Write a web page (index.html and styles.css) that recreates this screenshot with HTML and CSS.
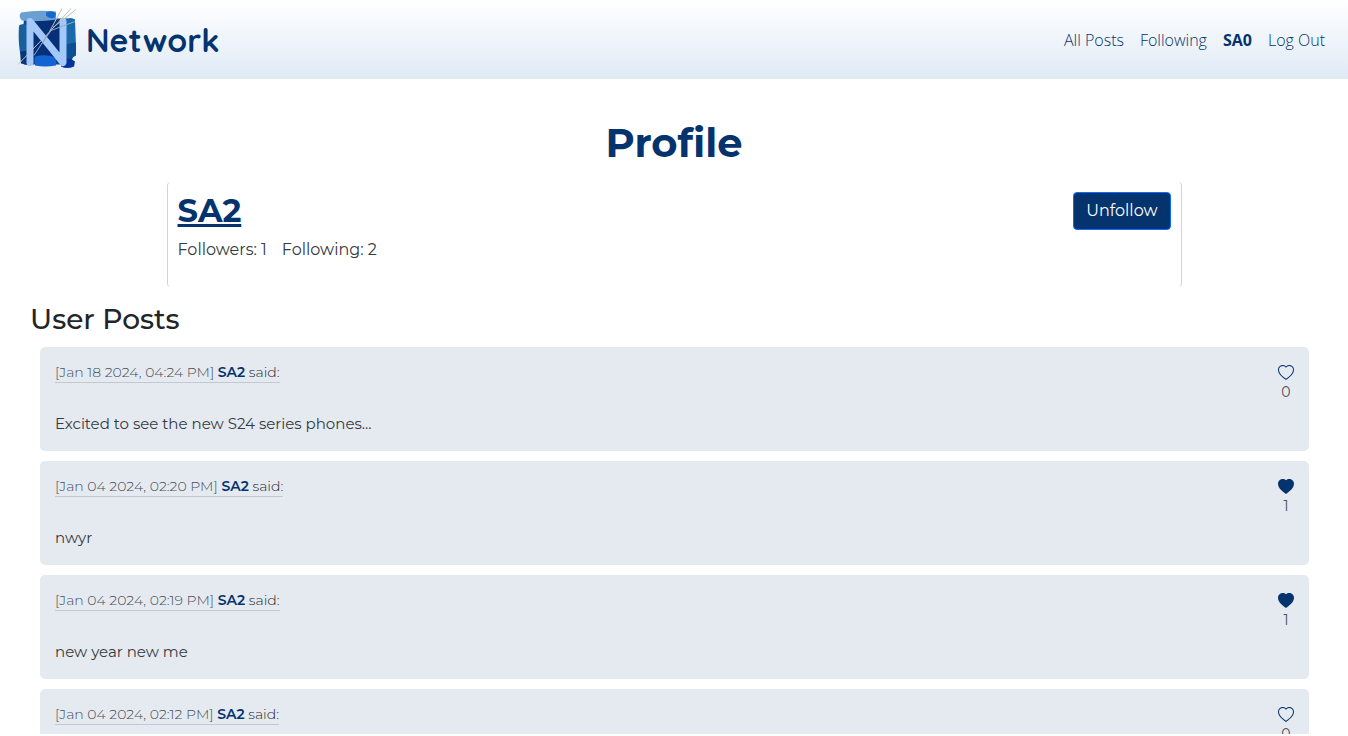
FILE: index.html
```html
<!DOCTYPE html>
<html lang="en">
<head>
<meta charset="utf-8">
<meta name="viewport" content="width=device-width, initial-scale=1">
<title>Network</title>
<link rel="stylesheet" href="styles.css">
</head>
<body class="page">
<svg class="symbols" aria-hidden="true">
  <symbol id="heart" viewBox="0 0 16 16"><path d="m8 2.748-.717-.737C5.6.281 2.514.878 1.4 3.053c-.523 1.023-.641 2.5.314 4.385.92 1.815 2.834 3.989 6.286 6.357 3.452-2.368 5.365-4.542 6.286-6.357.955-1.886.838-3.362.314-4.385C13.486.878 10.4.28 8.717 2.01zM8 15C-7.333 4.868 3.279-3.04 7.824 1.143q.09.083.176.171a3 3 0 0 1 .176-.17C12.72-3.042 23.333 4.867 8 15"/></symbol>
  <symbol id="heart-fill" viewBox="0 0 16 16"><path d="M8 1.314C12.438-3.248 23.534 4.735 8 15-7.534 4.736 3.562-3.248 8 1.314"/></symbol>
</svg>
<header class="navbar">
  <a class="brand" href="#">
    <svg class="logo" viewBox="0 0 60 62" aria-hidden="true">
      <path fill="#0d4a93" d="M6 10 50 10 56 18 56 46 52 56 6 56 3 44z"/>
      <path fill="#053078" d="M14 12H46V49H12z"/>
      <path fill="#17609b" d="M1 17 Q5 14 9 17 L10 44 Q6 47 2 44 Q0 32 1 17z"/>
      <path fill="#1b6bab" d="M47 11 Q53 8 57 11 L58 38 Q55 42 48 38z"/>
      <path fill="#0d4f91" d="M47 36 58 34 58 47 Q53 51 47 49z"/>
      <path fill="#6b9fd0" d="M3 4 Q20 1 38 3 L38 11 Q19 14 4 12 Q0 8 3 4z"/>
      <path fill="#1768cd" d="M28 4 Q34 1 38 5 L37 9 Q31 11 28 7z"/>
      <path fill="#1264d3" d="M17 48 Q27 45 38 49 L38 57 Q27 59 17 57z"/>
      <path fill="#09367b" d="M2 43 11 42 16 49 12 57 3 55z"/>
      <path fill="#07349b" d="M43 52 Q52 48 57 53 L56 58 Q49 61 43 58z"/>
      <path class="logo-letter" d="M12 54V13L45 54V13"/>
      <path class="logo-strings" stroke="#c4bfb8" d="M0 56 31 24 44 0M31 24 53 0M35 19 58 1"/>
      <path class="logo-strings" stroke="#8fa9cc" d="M16 47 31 24M24 35 33 22 57 13"/>
    </svg>
    <span>Network</span>
  </a>
  <nav class="nav-links">
    <a href="#">All Posts</a>
    <a href="#">Following</a>
    <a class="current-user" href="#">SA0</a>
    <a href="#">Log Out</a>
  </nav>
</header>
<main class="content">
  <h1 class="title">Profile</h1>
  <section class="profile">
    <div>
      <h2 class="profile-name"><a href="#">SA2</a></h2>
      <div class="stats"><span>Followers: 1</span><span>Following: 2</span></div>
    </div>
    <button class="follow-button" type="button">Unfollow</button>
  </section>
  <h3 class="posts-title">User Posts</h3>
  <div class="posts">
    <article class="post">
      <div>
        <div class="post-head"><time>[Jan 18 2024, 04:24 PM]</time> <a href="#">SA2</a> said:</div>
        <p class="post-text">Excited to see the new S24 series phones...</p>
      </div>
      <div class="likes"><button type="button" aria-label="Like"><svg><use href="#heart"/></svg></button><span>0</span></div>
    </article>
    <article class="post">
      <div>
        <div class="post-head"><time>[Jan 04 2024, 02:20 PM]</time> <a href="#">SA2</a> said:</div>
        <p class="post-text">nwyr</p>
      </div>
      <div class="likes"><button type="button" aria-label="Unlike"><svg><use href="#heart-fill"/></svg></button><span>1</span></div>
    </article>
    <article class="post">
      <div>
        <div class="post-head"><time>[Jan 04 2024, 02:19 PM]</time> <a href="#">SA2</a> said:</div>
        <p class="post-text">new year new me</p>
      </div>
      <div class="likes"><button type="button" aria-label="Unlike"><svg><use href="#heart-fill"/></svg></button><span>1</span></div>
    </article>
    <article class="post">
      <div>
        <div class="post-head"><time>[Jan 04 2024, 02:12 PM]</time> <a href="#">SA2</a> said:</div>
      </div>
      <div class="likes"><button type="button" aria-label="Like"><svg><use href="#heart"/></svg></button><span>0</span></div>
    </article>
  </div>
</main>
</body>
</html>
```
FILE: styles.css
```css
* { box-sizing: border-box; }
.page {
  margin: 0;
  height: 100vh;
  display: flex;
  flex-direction: column;
  overflow: hidden;
  border-bottom: 2px solid #fff;
  background: #fff;
  color: #212529;
  font: 400 16px/24px Montserrat, Inter, sans-serif;
}
.symbols { display: none; }
.navbar {
  flex: none;
  display: flex;
  align-items: center;
  justify-content: space-between;
  padding: 8px 23px 8px 18px;
  background: linear-gradient(#fff, #dfeaf5);
}
.brand {
  display: flex;
  align-items: center;
  gap: 8px;
  color: #05336e;
  font: 700 32px/40px Quicksand, Inter, sans-serif;
  text-decoration: none;
}
.logo { width: 60px; height: 63px; }
.logo-letter { fill: none; stroke: #a5c8fb; stroke-width: 7; stroke-linecap: round; stroke-linejoin: round; }
.logo-strings { fill: none; stroke-width: 1; }
.nav-links { display: flex; gap: 16px; font: 300 16px/24px "Segoe UI", "Open Sans", sans-serif; }
.nav-links a { color: #05336e; text-decoration: none; }
.nav-links .current-user { font-weight: 700; }
.content { flex: 1; min-height: 0; overflow: hidden; padding: 40px 30px 0; }
.title { margin: 0 0 15px; color: #05336e; font-size: 40px; line-height: 48px; font-weight: 700; text-align: center; }
.profile {
  display: flex;
  justify-content: space-between;
  align-items: flex-start;
  width: 79%;
  max-width: 1015px;
  margin: 0 auto;
  padding: 8px 10px 25px;
  border: solid #ced4da;
  border-width: 0 1px;
  border-radius: 4px;
}
.profile-name { margin: 0; font-size: 32px; line-height: 42px; font-weight: 700; }
.profile-name a { color: #05336e; }
.stats { display: flex; gap: 15px; padding-top: 6px; color: #343a40; }
.follow-button {
  padding: 6px 12px;
  border: 1px solid #0d6efd;
  border-radius: 4px;
  background: #05336e;
  color: #fff;
  font: 400 16px/24px Montserrat, Inter, sans-serif;
  margin-top: 2px;
}
.posts-title { margin: 15px 0 11px; font-size: 28px; line-height: 34px; font-weight: 500; }
.posts { display: grid; gap: 10px; padding: 0 9px 0 10px; }
.post {
  display: flex;
  justify-content: space-between;
  align-items: flex-start;
  padding: 15px;
  border-radius: 5px;
  background: #e5eaf1;
}
.post-head { width: fit-content; border-bottom: 1px solid #c4c8cf; font-size: 14px; line-height: 20px; font-weight: 300; }
.post-head time { color: #495057; }
.post-head a { color: #05336e; font-weight: 600; text-decoration: none; }
.post-text { margin: 29px 0 0; font-size: 15px; color: #343a40; }
.likes { display: flex; flex-direction: column; align-items: center; font-size: 14px; line-height: 20px; padding-top: 3px; color: #495057; }
.likes button { display: flex; padding: 0 0 1px; border: 0; background: none; color: #05336e; }
.likes svg { width: 16px; height: 16px; fill: currentColor; }
```
